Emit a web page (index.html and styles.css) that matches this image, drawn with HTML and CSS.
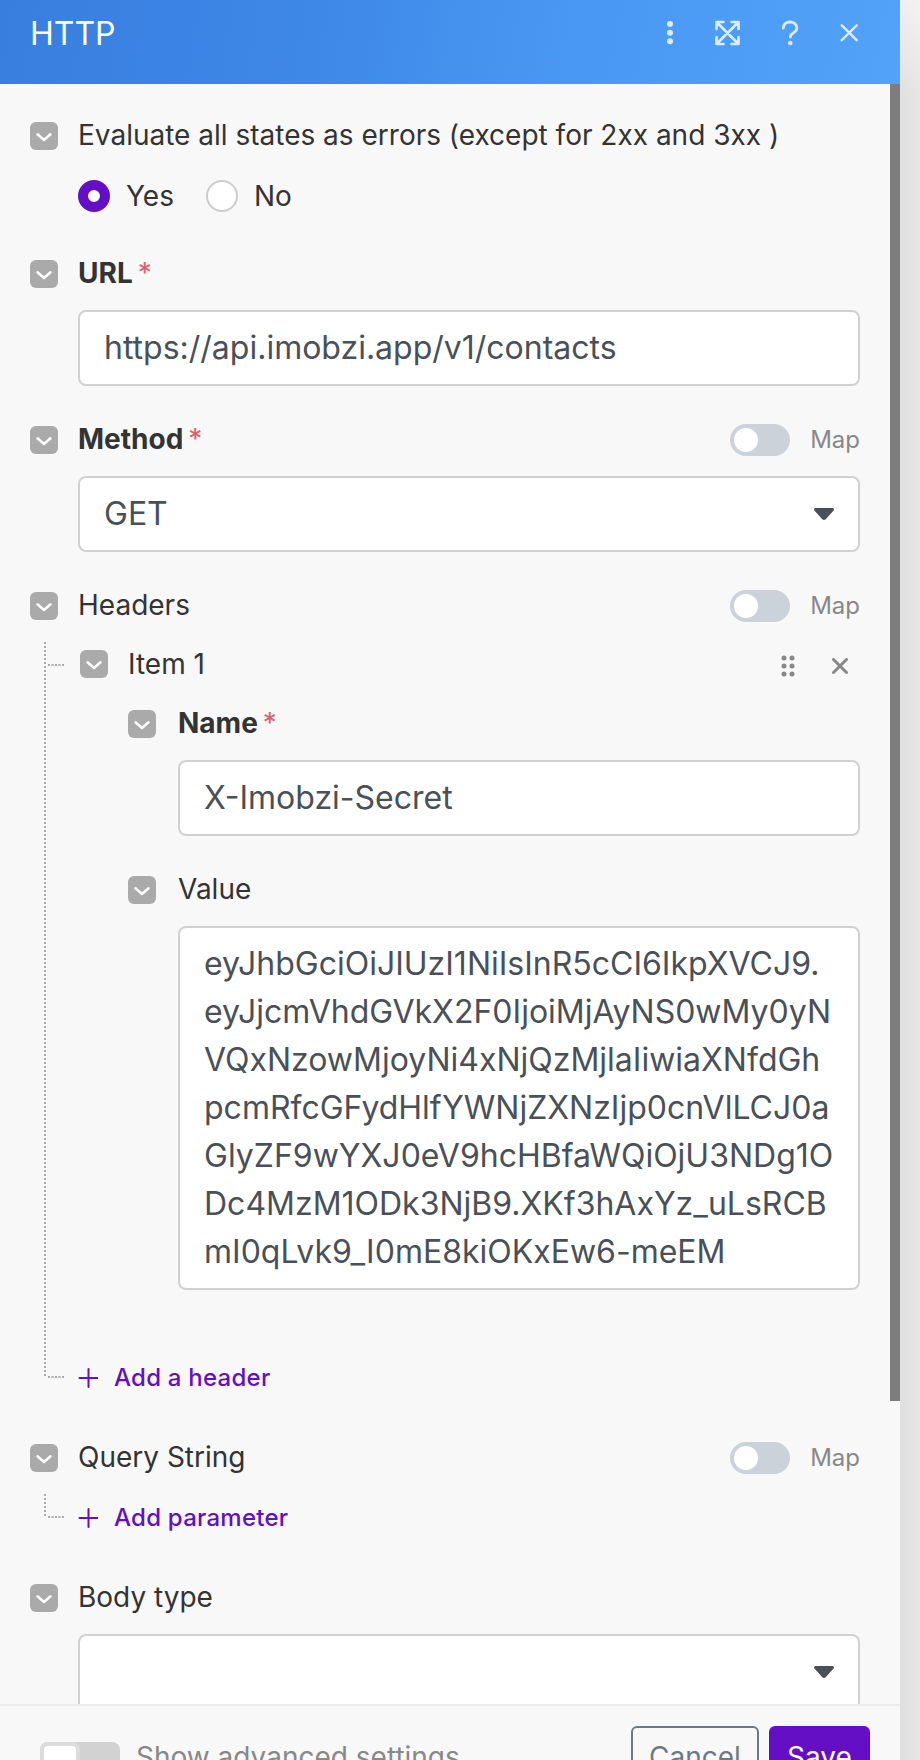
FILE: index.html
```html
<!DOCTYPE html>
<html lang="en">
<head>
<meta charset="utf-8">
<title>HTTP</title>
<link rel="stylesheet" href="styles.css">
</head>
<body>
<svg class="defs" aria-hidden="true">
  <symbol id="chevron" viewBox="0 0 28 28"><path d="M7.500 12.300L14 18l6.500-5.700" fill="none" stroke="#fff" stroke-width="2.500" stroke-linecap="round" stroke-linejoin="round"/></symbol>
  <symbol id="caret" viewBox="0 0 20 12"><path d="M1.8 0H18.2C20 0 20.4 1.7 19.4 2.8L11.7 11.2Q10 12.8 8.3 11.2L.6 2.8C-.4 1.7 0 0 1.8 0Z" fill="#495058"/></symbol>
  <symbol id="plus" viewBox="0 0 20 20"><path d="M10.500 1v18M1.500 10h18" fill="none" stroke="#640fc6" stroke-width="2" stroke-linecap="round"/></symbol>
</svg>
<div class="screen">
  <section class="panel">
    <header class="titlebar">
      <h1 class="title">HTTP</h1>
      <div class="actions">
        <svg class="icon-dots" viewBox="0 0 6 24"><g fill="#dcebff"><circle cx="3" cy="3" r="3"/><circle cx="3" cy="11.7" r="3"/><circle cx="3" cy="20.3" r="3"/></g></svg>
        <svg class="icon-expand" viewBox="0 0 26 26"><path d="M2.500 9V2H9.500M17.500 2H24.500V9M24.500 17V24H17.500M9.500 24H2.500V17M3 2.500L24 23.500M24 2.500L3 23.500" fill="none" stroke="#dcebff" stroke-width="2.700" stroke-linecap="round" stroke-linejoin="round"/></svg>
        <svg class="icon-help" viewBox="0 0 18 26"><path d="M2.3 8.2C2.3 4 5.2 2 8.9 2C12.8 2 15.8 4.400 15.800 8C15.800 13.200 9.300 12.500 9.300 17" fill="none" stroke="#dcebff" stroke-width="2.800" stroke-linecap="round"/><circle cx="9.300" cy="23" r="2.300" fill="#dcebff"/></svg>
        <svg class="icon-close" viewBox="0 0 18 18"><path d="M1.800 1.300L16.700 16.200M16.700 1.300L1.800 16.200" fill="none" stroke="#dcebff" stroke-width="2.400" stroke-linecap="round"/></svg>
      </div>
    </header>
    <div class="content">
      <form class="fields">
        <div class="label-row"><svg class="fold"><use href="#chevron"/></svg><span class="label">Evaluate all states as errors (except for 2xx and 3xx )</span></div>
        <div class="radios">
          <span class="radio radio-on"></span><span class="radio-text yes">Yes</span>
          <span class="radio"></span><span class="radio-text">No</span>
        </div>

        <div class="field">
          <div class="label-row"><svg class="fold"><use href="#chevron"/></svg><span class="label required">URL</span><span class="star">*</span></div>
          <div class="input"><span class="value">https://api.imobzi.app/v1/contacts</span></div>
        </div>

        <div class="field">
          <div class="label-row"><svg class="fold"><use href="#chevron"/></svg><span class="label required">Method</span><span class="star">*</span><span class="switch"></span><span class="map">Map</span></div>
          <div class="input"><span class="value">GET</span><svg class="caret"><use href="#caret"/></svg></div>
        </div>

        <div class="label-row"><svg class="fold"><use href="#chevron"/></svg><span class="label">Headers</span><span class="switch"></span><span class="map">Map</span></div>
        <div class="tree">
          <svg class="tree-line" width="22" height="736"><path d="M3 0V736"/><path class="branch" d="M6 23H22"/><path class="branch" d="M6 735H22"/></svg>
          <div class="tree-body">
            <div class="label-row item-row"><svg class="fold"><use href="#chevron"/></svg><span class="label item-label">Item 1</span>
              <svg class="icon-drag" viewBox="0 0 14 22"><g fill="#888"><circle cx="3" cy="3" r="2.500"/><circle cx="11" cy="3" r="2.500"/><circle cx="3" cy="11" r="2.500"/><circle cx="11" cy="11" r="2.500"/><circle cx="3" cy="19" r="2.500"/><circle cx="11" cy="19" r="2.500"/></g></svg>
              <svg class="icon-remove" viewBox="0 0 16 16"><path d="M1.500 1.500L14.500 14.500M14.500 1.500L1.500 14.500" fill="none" stroke="#888" stroke-width="3" stroke-linecap="round"/></svg>
            </div>
            <div class="nested">
              <div class="field">
                <div class="label-row"><svg class="fold"><use href="#chevron"/></svg><span class="label required">Name</span><span class="star">*</span></div>
                <div class="input"><span class="value">X-Imobzi-Secret</span></div>
              </div>
              <div class="field">
                <div class="label-row"><svg class="fold"><use href="#chevron"/></svg><span class="label">Value</span></div>
                <div class="input area"><span class="value">eyJhbGciOiJIUzI1NiIsInR5cCI6IkpXVCJ9.<br>eyJjcmVhdGVkX2F0IjoiMjAyNS0wMy0yN<br>VQxNzowMjoyNi4xNjQzMjlaIiwiaXNfdGh<br>pcmRfcGFydHlfYWNjZXNzIjp0cnVlLCJ0a<br>GlyZF9wYXJ0eV9hcHBfaWQiOjU3NDg1O<br>Dc4MzM1ODk3NjB9.XKf3hAxYz_uLsRCB<br>mI0qLvk9_I0mE8kiOKxEw6-meEM</span></div>
              </div>
            </div>
            <div class="add add-header"><svg class="plus"><use href="#plus"/></svg><span>Add a header</span></div>
          </div>
        </div>

        <div class="label-row"><svg class="fold"><use href="#chevron"/></svg><span class="label">Query String</span><span class="switch"></span><span class="map">Map</span></div>
        <div class="tree">
          <svg class="tree-line" width="22" height="24"><path d="M3 0V24"/><path class="branch" d="M6 23H22"/></svg>
          <div class="tree-body">
            <div class="add add-param"><svg class="plus"><use href="#plus"/></svg><span>Add parameter</span></div>
          </div>
        </div>

        <div class="label-row"><svg class="fold"><use href="#chevron"/></svg><span class="label">Body type</span></div>
        <div class="input"><span class="value"></span><svg class="caret"><use href="#caret"/></svg></div>
      </form>
      <div class="scrollbar"><div class="thumb"></div></div>
    </div>
    <footer class="footer">
      <span class="adv-switch"><span class="adv-knob"></span></span>
      <span class="adv-text">Show advanced settings</span>
      <span class="btn cancel">Cancel</span>
      <span class="btn save">Save</span>
    </footer>
  </section>
  <div class="backdrop"></div>
</div>
</body>
</html>
```

FILE: styles.css
```css
* { box-sizing: border-box; }
body { margin: 0; overflow: hidden; font-family: Inter, "Liberation Sans", sans-serif; }
svg { display: block; flex: none; }
.defs { position: absolute; width: 0; height: 0; }
.screen { display: flex; width: 920px; height: 1760px; overflow: hidden; }
.panel { display: flex; flex-direction: column; width: 900px; height: 1760px; background: #f8f8f8; }
.backdrop { width: 20px; background: linear-gradient(180deg, rgba(255,255,255,.5), rgba(255,255,255,0) 100px), linear-gradient(90deg, #dfdfdf, #e6e6e6); }

.titlebar { display: flex; justify-content: space-between; height: 84px; padding: 0 42px 0 30px; background: linear-gradient(100deg, #387edf 0%, #3e88e8 35%, #4897f2 62%, #52a2f9 100%); }
.title { margin: 0; font-size: 32px; font-weight: 400; line-height: 68px; color: #fff; }
.actions { display: flex; align-items: center; height: 65px; }
.icon-dots { width: 6px; height: 24px; margin-right: 41px; }
.icon-expand { width: 26px; height: 26px; margin-right: 41px; }
.icon-help { width: 18px; height: 26px; margin-right: 41px; }
.icon-close { width: 18px; height: 18px; }

.content { display: flex; height: 1620px; overflow: hidden; }
.fields { width: 890px; flex: none; padding: 38px 30px 0; }
.scrollbar { width: 10px; }
.thumb { height: 1317px; background: #7d7d7d; }

.label-row { display: flex; align-items: center; height: 28px; margin-bottom: 22px; }
.fold { width: 28px; height: 28px; margin-right: 20px; border-radius: 6px; background: #aaa; }
.label { font-size: 28px; line-height: 28px; margin-top: -2px; color: #333; white-space: nowrap; }
.required { font-weight: 700; }
.star { margin: -2px 0 0 5px; font-size: 28px; line-height: 28px; color: #e0606b; }
.switch { width: 60px; height: 32px; flex: none; margin: 0 20px 0 auto; border-radius: 16px; background: radial-gradient(circle at 16px 16px, #fff 11.500px, transparent 12.500px) #cbd2da; }
.map { font-size: 24px; line-height: 28px; color: #888; }

.radios { display: flex; align-items: center; height: 32px; margin: 30px 0 48px 48px; }
.radio { width: 32px; height: 32px; margin-right: 16px; border: 2px solid #ccc; border-radius: 50%; background: #fff; }
.radio-on { border: 10px solid #640fc6; }
.radio-text { font-size: 28px; line-height: 32px; color: #333; }
.yes { width: 80px; }

.field { margin-bottom: 40px; }
.input { display: flex; align-items: center; justify-content: space-between; height: 76px; margin-left: 48px; padding: 0 24px; border: 2px solid #d1d1d1; border-radius: 8px; background: #fff; }
.value { font-size: 32px; line-height: 48px; color: #495058; white-space: nowrap; }
.area { height: 364px; }
.caret { width: 20px; height: 12px; }

.tree { display: flex; margin-left: 12px; }
.tree-line { width: 22px; }
.tree-line path { fill: none; stroke: #aaa; stroke-width: 2; stroke-dasharray: 2 2; }
.tree-line .branch { stroke-dasharray: 2 1.5; }
.tree-body { flex: 1; }
.item-row { margin: 8px 0 32px 16px; padding-right: 12px; }
.item-label { margin-top: 0; }
.icon-drag { width: 14px; height: 22px; margin: 4px 37px 0 auto; }
.icon-remove { width: 16px; height: 16px; margin-top: 4px; }
.nested { margin-left: 64px; }
.nested .fold { margin-right: 22px; }
.nested .input { margin-left: 50px; }
.add { display: flex; align-items: center; height: 28px; color: #640fc6; font-size: 24px; font-weight: 500; line-height: 28px; letter-spacing: .24px; }
.add span { margin-top: 2px; }
.plus { width: 20px; height: 20px; margin: 2px 16px 0 14px; }
.add-header { margin: 73px 0 53px; }
.add-param { margin: 9px 0 53px; }

.footer { display: flex; align-items: flex-start; height: 56px; padding: 20px 30px 0 40px; border-top: 2px solid #ececec; overflow: hidden; }
.adv-switch { width: 80px; height: 40px; flex: none; margin: 16px 16px 0 0; border-radius: 8px; background: #d2d2d2; }
.adv-knob { display: block; width: 40px; height: 40px; border: 4px solid #dcdcdc; border-radius: 8px; background: #fff; }
.adv-text { flex: 1; margin-top: 11px; font-size: 28px; line-height: 40px; color: #888; white-space: nowrap; }
.btn { height: 68px; flex: none; border-radius: 6px; font-size: 28px; line-height: 58px; text-align: center; }
.cancel { width: 128px; margin-right: 10px; border: 2px solid #6e7880; color: #6e7880; }
.save { width: 101px; padding-top: 2px; background: #640fc6; color: #fff; }
```
